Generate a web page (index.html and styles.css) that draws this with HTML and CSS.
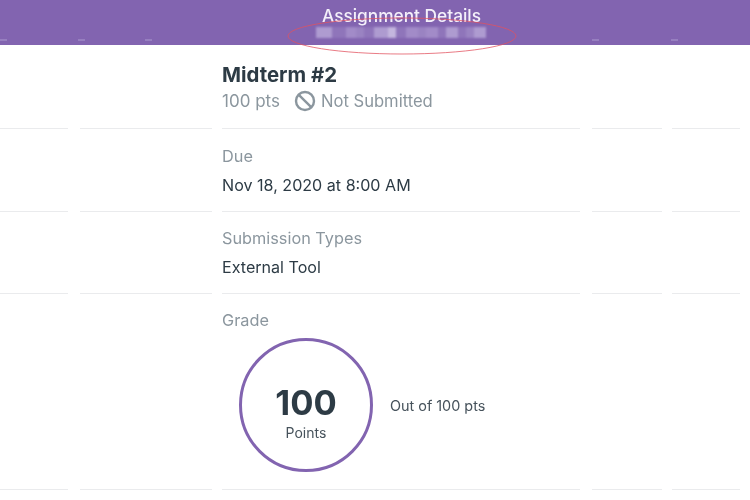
FILE: index.html
```html
<!DOCTYPE html>
<html lang="en">
<head>
<meta charset="utf-8">
<title>Assignment Details</title>
<link rel="stylesheet" href="styles.css">
</head>
<body>
<header class="bar">
  <h1 class="bar-title">Assignment Details</h1>
  <div class="mosaic" aria-hidden="true">
    <span class="m w16 a"></span><span class="m w14 d"></span><span class="m w10 b"></span><span class="m w8 e"></span><span class="m w10 d"></span><span class="m w14 a"></span><span class="m w8 c"></span><span class="m w10 d"></span><span class="m w12 b"></span><span class="m w8 e"></span><span class="m w12 b"></span><span class="m w8 d"></span><span class="m w12 a"></span><span class="m w8 d"></span><span class="m w8 e"></span><span class="m w12 a"></span>
  </div>
  <svg class="ring" viewBox="0 0 240 46" aria-hidden="true"><ellipse cx="117" cy="22" rx="114" ry="18" /></svg>
  <span class="speck sp1"></span><span class="speck sp2"></span><span class="speck sp3"></span><span class="speck sp4"></span><span class="speck sp5"></span>
</header>
<main class="content">
  <section class="sec sec-title">
    <h2 class="name">Midterm #2</h2>
    <div class="meta">
      <span>100 pts</span>
      <svg class="ban" viewBox="0 0 22 22" aria-hidden="true"><circle cx="11" cy="11" r="9"/><path d="M4.8 4.8 17.2 17.2"/></svg>
      <span class="status">Not Submitted</span>
    </div>
  </section>
  <div class="rule"><i class="s1"></i><i class="s2"></i><i class="s3"></i><i class="s4"></i><i class="s5"></i></div>
  <section class="sec">
    <div class="label">Due</div>
    <div class="value">Nov 18, 2020 at 8:00 AM</div>
  </section>
  <div class="rule"><i class="s1"></i><i class="s2"></i><i class="s3"></i><i class="s4"></i><i class="s5"></i></div>
  <section class="sec sec-types">
    <div class="label">Submission Types</div>
    <div class="value">External Tool</div>
  </section>
  <div class="rule"><i class="s1"></i><i class="s2"></i><i class="s3"></i><i class="s4"></i><i class="s5"></i></div>
  <section class="sec sec-grade">
    <div class="label">Grade</div>
    <div class="grade">
      <div class="circle">
        <div class="score">100</div>
        <div class="unit">Points</div>
      </div>
      <div class="out">Out of 100 pts</div>
    </div>
  </section>
  <div class="rule"><i class="s1"></i><i class="s2"></i><i class="s3"></i><i class="s4"></i><i class="s5"></i></div>
</main>
</body>
</html>
```
FILE: styles.css
```css
* { box-sizing: border-box; }
html, body { margin: 0; padding: 0; }
body {
  width: 750px;
  height: 500px;
  overflow: hidden;
  background: #fff;
  font-family: Inter, "Liberation Sans", sans-serif;
  color: #2d3b45;
}
.bar {
  position: relative;
  height: 45px;
  background: #8264b0;
  display: flex;
  flex-direction: column;
  align-items: center;
  padding: 7px 0 0 53px;
}
.bar-title {
  margin: 0;
  font-size: 17.3px;
  line-height: 18px;
  font-weight: 500;
  color: #f4f0fa;
  filter: blur(0.35px);
}
.mosaic {
  display: flex;
  height: 11px;
  margin-top: 2px;
  margin-left: -1px;
  filter: blur(1px);
}
.m { display: block; height: 100%; }
.w8 { width: 8px; } .w10 { width: 10px; } .w12 { width: 12px; } .w14 { width: 14px; } .w16 { width: 16px; }
.a { background: #ae9bd0; }
.b { background: #a28bc8; }
.c { background: #c4b6de; }
.d { background: #8f75ba; }
.e { background: #9a83c2; }
.ring {
  position: absolute;
  left: 285px;
  top: 14px;
  width: 240px;
  height: 46px;
  overflow: visible;
}
.ring ellipse { fill: none; stroke: #e2525f; stroke-width: 0.9; opacity: .85; }
.speck { position: absolute; height: 2px; width: 7px; background: #977fc0; filter: blur(0.6px); }
.sp1 { left: 0; top: 39px; }
.sp2 { left: 78px; top: 39px; }
.sp3 { left: 145px; top: 39px; }
.sp4 { left: 592px; top: 39px; }
.sp5 { left: 671px; top: 39px; }
.content { filter: blur(0.3px); }
.sec { padding: 17px 0 0 222px; height: 82px; }
.sec-title { height: 83px; padding-top: 18px; }
.sec-types { height: 81px; padding-top: 16px; }
.sec-grade { height: 195px; padding-top: 16px; }
.name {
  margin: 0;
  font-size: 20.4px;
  line-height: 24px;
  font-weight: 700;
  color: #2d3b45;
}
.meta {
  display: flex;
  align-items: center;
  margin-top: 3px;
  font-size: 17px;
  line-height: 22px;
  color: #8b969e;
}
.status { font-size: 16.6px; }
.ban { width: 22px; height: 22px; margin: 0 5px 0 14px; }
.ban circle, .ban path { fill: none; stroke: #8b969e; stroke-width: 2.4; }
.label { font-size: 16.3px; line-height: 20px; color: #8b969e; }
.value { margin-top: 9px; font-size: 16.1px; line-height: 20px; color: #2d3b45; }
.grade { display: flex; align-items: center; margin-top: 8px; padding-left: 17px; }
.circle {
  width: 134px;
  height: 134px;
  border: 3px solid #8264b0;
  border-radius: 50%;
  display: flex;
  flex-direction: column;
  align-items: center;
  justify-content: center;
}
.score { font-size: 34.5px; line-height: 36px; font-weight: 700; margin-top: 17px; }
.unit { font-size: 14px; line-height: 18px; margin-top: 3px; color: #46525b; }
.out { margin-left: 17px; font-size: 14.4px; color: #46525b; }
.rule { display: flex; height: 1px; }
.rule i { display: block; height: 1px; background: #eaebed; margin-right: 10px; }
.s1 { width: 68px; margin-right: 12px !important; }
.s2 { width: 132px; }
.s3 { width: 358px; margin-right: 12px !important; }
.s4 { width: 70px; }
.s5 { width: 68px; }
```
